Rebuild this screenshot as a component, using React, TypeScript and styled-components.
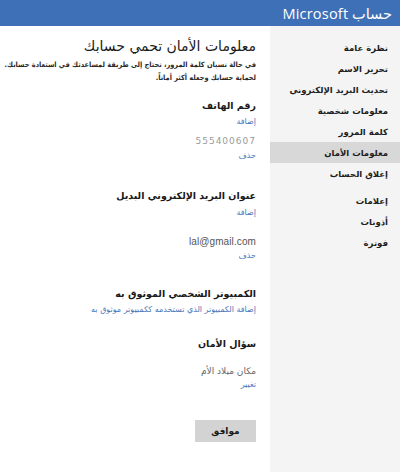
import React from "react";
import styled, { createGlobalStyle } from "styled-components";

const GlobalStyle = createGlobalStyle`
  html, body {
    margin: 0;
    padding: 0;
    background: #ffffff;
    overflow: hidden;
  }
  body {
    font-family: Tahoma, "DejaVu Sans", "Liberation Sans", sans-serif;
    direction: rtl;
  }
`;

const Page = styled.div`
  display: flex;
  flex-direction: column;
  width: 400px;
  height: 472px;
`;

const TopBar = styled.header`
  height: 26px;
  flex: none;
  background: #3e70b7;
  display: flex;
  align-items: center;
  padding: 0 8px;
  color: #ffffff;
  font-size: 14.5px;
`;

const Brand = styled.span`
  font-family: "Open Sans", "DejaVu Sans", sans-serif;
  font-weight: 400;
  letter-spacing: 0.2px;
`;

const Body = styled.div`
  flex: 1;
  display: flex;
  flex-direction: row;
  min-height: 0;
`;

const Sidebar = styled.nav`
  width: 130px;
  flex: none;
  background: #f4f4f4;
  padding-top: 11px;
  display: flex;
  flex-direction: column;
`;

const NavGroup = styled.div<{ $gap?: number }>`
  display: flex;
  flex-direction: column;
  margin-top: ${(p) => p.$gap ?? 0}px;
`;

const NavItem = styled.a<{ $active?: boolean }>`
  height: 21px;
  display: flex;
  align-items: center;
  padding-right: 12px;
  font-size: 8.5px;
  font-weight: bold;
  color: #1e1e1e;
  background: ${(p) => (p.$active ? "#d8d8d8" : "transparent")};
  cursor: pointer;
`;

const Main = styled.main`
  flex: 1;
  padding: 10px 14px 0 0;
  display: flex;
  flex-direction: column;
  align-items: flex-start;
  overflow: hidden;
`;

const Title = styled.h1`
  margin: 0;
  font-size: 14px;
  line-height: 20px;
  font-weight: normal;
  color: #1a1a1a;
`;

const Intro = styled.p`
  margin: 2px 0 0;
  font-family: "DejaVu Sans Condensed", "DejaVu Sans", sans-serif;
  font-stretch: condensed;
  font-size: 7.3px;
  line-height: 13px;
  font-weight: bold;
  color: #2a2a2a;
  white-space: nowrap;
`;

const Label = styled.div<{ $top: number }>`
  margin-top: ${(p) => p.$top}px;
  font-size: 9.5px;
  line-height: 14px;
  font-weight: bold;
  color: #1a1a1a;
`;

const Link = styled.a<{ $top?: number }>`
  margin-top: ${(p) => p.$top ?? 0}px;
  font-size: 8px;
  line-height: 14px;
  color: #4a74b8;
  cursor: pointer;
`;

const Value = styled.div<{ $top: number; $latin?: boolean }>`
  margin-top: ${(p) => p.$top}px;
  font-family: ${(p) =>
    p.$latin ? '"Liberation Sans", Arial, sans-serif' : "inherit"};
  font-size: ${(p) => (p.$latin ? "10px" : "9px")};
  line-height: 14px;
  color: ${(p) => (p.$latin ? "#555555" : "#666666")};
  letter-spacing: ${(p) => (p.$latin ? "0.1px" : "0")};
`;

const Faded = styled(Value)`
  color: #9a9a9a;
  letter-spacing: 1px;
  direction: ltr;
`;

const OkButton = styled.button`
  margin-top: 28px;
  width: 61px;
  height: 22px;
  border: none;
  background: #d3d3d3;
  font-family: inherit;
  font-size: 9px;
  font-weight: bold;
  color: #1a1a1a;
  cursor: pointer;
`;

const navTop = [
  "نظرة عامة",
  "تحرير الاسم",
  "تحديث البريد الإلكتروني",
  "معلومات شخصية",
  "كلمة المرور",
  "معلومات الأمان",
  "إغلاق الحساب",
];

const navBottom = ["إعلامات", "أذونات", "فوترة"];

const App = () => {
  return (
    <>
      <GlobalStyle />
      <Page>
        <TopBar>
          <Brand>حساب Microsoft</Brand>
        </TopBar>
        <Body>
          <Sidebar>
            <NavGroup>
              {navTop.map((item) => (
                <NavItem key={item} $active={item === "معلومات الأمان"}>
                  {item}
                </NavItem>
              ))}
            </NavGroup>
            <NavGroup $gap={6}>
              {navBottom.map((item) => (
                <NavItem key={item}>{item}</NavItem>
              ))}
            </NavGroup>
          </Sidebar>
          <Main>
            <Title>معلومات الأمان تحمي حسابك</Title>
            <Intro>
              في حالة نسيان كلمة المرور، نحتاج إلى طريقة لمساعدتك في استعادة حسابك.
              <br />
              لحماية حسابك وجعله أكثر أماناً.
            </Intro>

            <Label $top={15}>رقم الهاتف</Label>
            <Link $top={2}>إضافة</Link>
            <Faded $top={5}>555400607</Faded>
            <Link $top={1}>حذف</Link>

            <Label $top={26}>عنوان البريد الإلكتروني البديل</Label>
            <Link $top={3}>إضافة</Link>
            <Value $top={15} $latin>
              lal@gmail.com
            </Value>
            <Link>حذف</Link>

            <Label $top={24}>الكمبيوتر الشخصي الموثوق به</Label>
            <Link $top={2}>إضافة الكمبيوتر الذي تستخدمه ككمبيوتر موثوق به</Link>

            <Label $top={20}>سؤال الأمان</Label>
            <Value $top={13}>مكان ميلاد الأم</Value>
            <Link>تغيير</Link>

            <OkButton>موافق</OkButton>
          </Main>
        </Body>
      </Page>
    </>
  );
};

export default App;
